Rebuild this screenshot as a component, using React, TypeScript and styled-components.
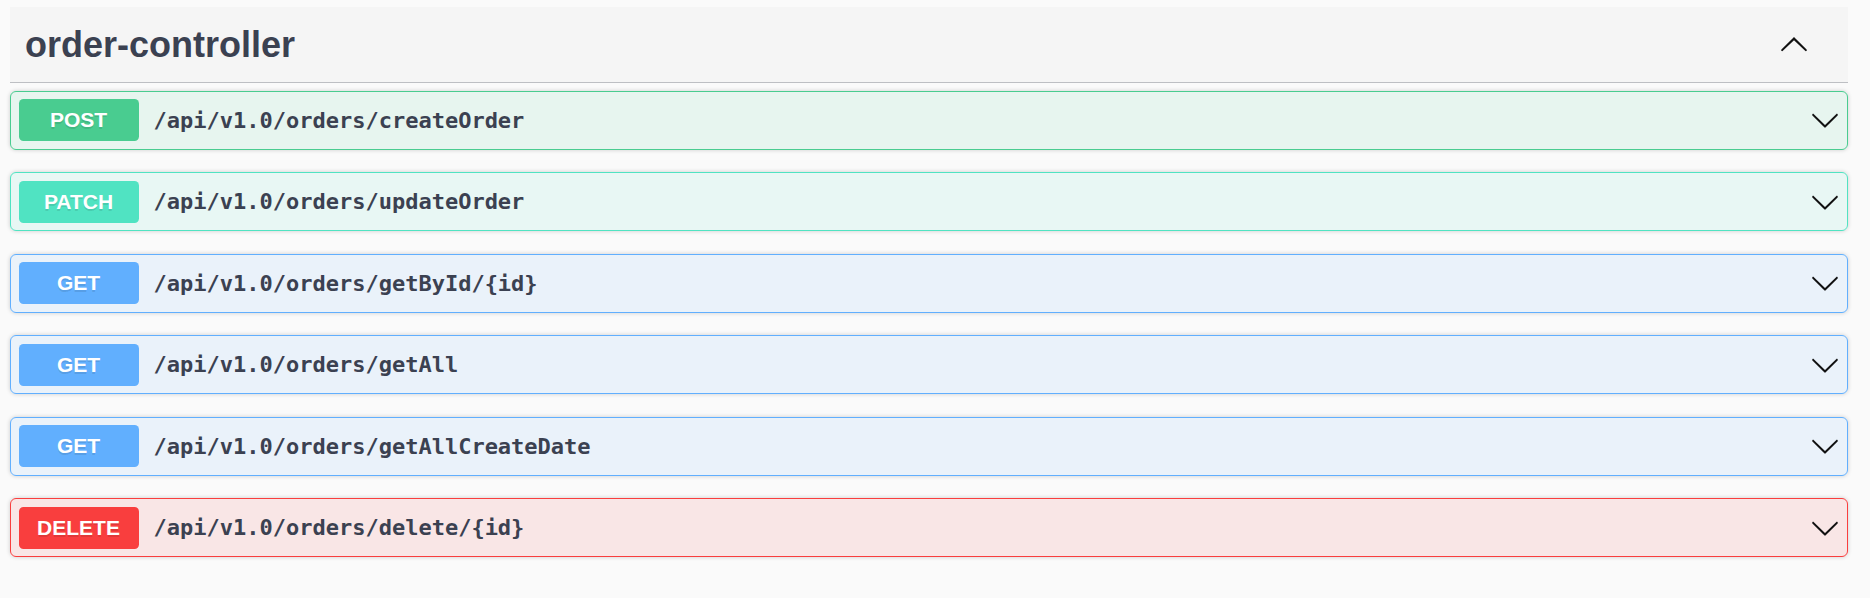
import React from "react";
import styled, { createGlobalStyle } from "styled-components";

const Global = createGlobalStyle`
  html, body { margin: 0; padding: 0; background: #fafafa; }
  body { font-family: "Liberation Sans", Arial, sans-serif; color: #3b4151; }
`;

type Method = "post" | "patch" | "get" | "delete";

const colors: Record<Method, string> = {
  post: "73,204,144",
  patch: "80,227,194",
  get: "97,175,254",
  delete: "249,62,62",
};

const Wrapper = styled.div`
  padding: 7px 22px 0 10px;
`;

const TagHeader = styled.div`
  display: flex;
  align-items: center;
  padding: 15px 39px 15px 15px;
  background: rgba(0, 0, 0, 0.02);
  border-bottom: 1px solid rgba(59, 65, 81, 0.3);
  margin-bottom: 7.5px;
`;

const TagTitle = styled.h3`
  flex: 1;
  margin: 0;
  font-family: "Liberation Sans", Arial, sans-serif;
  font-size: 36px;
  font-weight: 700;
  line-height: 45px;
  color: #3b4151;
`;

const Block = styled.div<{ $m: Method }>`
  margin: 0 0 22.5px;
  border: 1px solid rgb(${(p) => colors[p.$m]});
  border-radius: 6px;
  background: rgba(${(p) => colors[p.$m]}, 0.1);
  box-shadow: 0 0 4.5px rgba(0, 0, 0, 0.19);
`;

const Summary = styled.div`
  display: flex;
  align-items: center;
  padding: 7.5px;
`;

const Badge = styled.span<{ $m: Method }>`
  min-width: 120px;
  padding: 9px 0;
  box-sizing: border-box;
  text-align: center;
  font-family: "Liberation Sans", Arial, sans-serif;
  font-size: 21px;
  line-height: 24px;
  font-weight: 700;
  color: #fff;
  border-radius: 4.5px;
  background: rgb(${(p) => colors[p.$m]});
  text-shadow: 0 1.5px 0 rgba(0, 0, 0, 0.1);
`;

const Path = styled.span`
  flex: 1;
  padding: 0 15px;
  font-family: "DejaVu Sans Mono", "Liberation Mono", monospace;
  font-size: 22px;
  font-weight: 700;
  color: #3b4151;
`;

const Arrow = styled.svg<{ $up?: boolean }>`
  width: 30px;
  height: 30px;
  flex: none;
  transform: ${(p) => (p.$up ? "rotate(180deg)" : "none")};
`;

const Chevron = ({ up }: { up?: boolean }) => (
  <Arrow $up={up} viewBox="0 0 20 20">
    <path
      fill="#111"
      d="M17.418 6.109c.272-.268.709-.268.979 0s.271.701 0 .969l-7.908 7.83c-.27.268-.707.268-.979 0l-7.908-7.83c-.27-.268-.27-.701 0-.969.271-.268.709-.268.979 0L10 13.25l7.418-7.141z"
    />
  </Arrow>
);

const ops: { m: Method; path: string }[] = [
  { m: "post", path: "/api/v1.0/orders/createOrder" },
  { m: "patch", path: "/api/v1.0/orders/updateOrder" },
  { m: "get", path: "/api/v1.0/orders/getById/{id}" },
  { m: "get", path: "/api/v1.0/orders/getAll" },
  { m: "get", path: "/api/v1.0/orders/getAllCreateDate" },
  { m: "delete", path: "/api/v1.0/orders/delete/{id}" },
];

export default function App() {
  return (
    <>
      <Global />
      <Wrapper>
        <TagHeader>
          <TagTitle>order-controller</TagTitle>
          <Chevron up />
        </TagHeader>
        {ops.map((o, i) => (
          <Block key={i} $m={o.m}>
            <Summary>
              <Badge $m={o.m}>{o.m.toUpperCase()}</Badge>
              <Path>{o.path}</Path>
              <Chevron />
            </Summary>
          </Block>
        ))}
      </Wrapper>
    </>
  );
}
